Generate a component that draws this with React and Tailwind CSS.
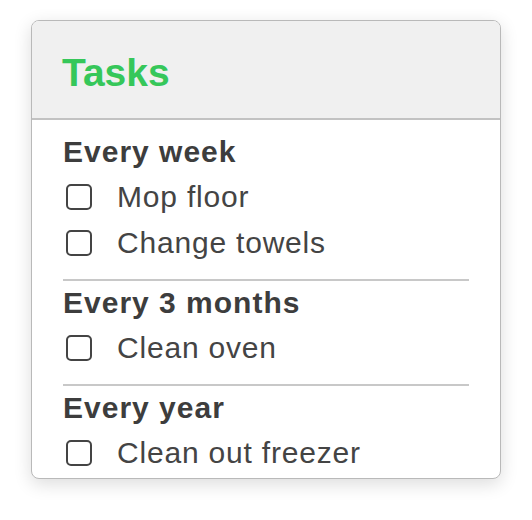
const sections = [
  { title: "Every week", items: ["Mop floor", "Change towels"] },
  { title: "Every 3 months", items: ["Clean oven"] },
  { title: "Every year", items: ["Clean out freezer"] },
];

function Task({ label }) {
  return (
    <label className="flex h-[46px] items-center gap-[25px] pl-[3px]">
      <input
        type="checkbox"
        className="h-[26px] w-[26px] shrink-0 appearance-none rounded-[5px] border-2 border-[#444] bg-white"
      />
      <span className="text-[30px] leading-none tracking-[0.8px] text-[#444]">{label}</span>
    </label>
  );
}

export default function App() {
  return (
    <div className="min-h-[520px] bg-white pl-[31px] pt-[20px] font-['Liberation_Sans',Arial,sans-serif]">
      <div className="h-[459px] w-[470px] overflow-hidden rounded-[8px] border border-[#b9b9b9] bg-white shadow-[0_5px_18px_rgba(0,0,0,0.14)]">
        <div className="border-b-2 border-[#c2c2c2] bg-[#f0f0f0] px-[30px] pb-[26px] pt-[32px]">
          <h1 className="text-[39px] font-bold leading-none text-[#36c75a]">Tasks</h1>
        </div>

        <div className="px-[31px] pt-[10px]">
          {sections.map((s, i) => (
            <div key={s.title}>
              {i > 0 && <div className="mt-[13px] h-[2px] bg-[#c8c8c8]" />}
              <h2 className="flex h-[44px] items-center text-[30px] font-bold leading-none tracking-[1px] text-[#3d3d3d]">
                {s.title}
              </h2>
              {s.items.map((t) => (
                <Task key={t} label={t} />
              ))}
            </div>
          ))}
        </div>
      </div>
    </div>
  );
}
